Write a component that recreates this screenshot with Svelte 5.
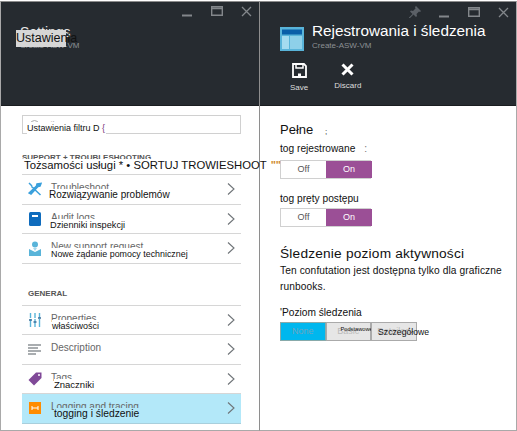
<script>
	const supportRows = [
		{ icon: 'wrench', en: 'Troubleshoot', pl: 'Rozwiązywanie problemów', dx: -2, size: 10 },
		{ icon: 'book', en: 'Audit logs', pl: 'Dzienniki inspekcji', dx: -1, size: 9.2 },
		{ icon: 'person', en: 'New support request', pl: 'Nowe żądanie pomocy technicznej', dx: 0, size: 8.9 }
	];
	const generalRows = [
		{ icon: 'sliders', en: 'Properties', pl: 'właściwości', dx: 1, size: 9 },
		{ icon: 'lines', en: 'Description', pl: '', dx: 0, size: 9 },
		{ icon: 'tag', en: 'Tags', pl: 'Znaczniki', dx: 3, size: 9.5 },
		{ icon: 'log', en: 'Logging and tracing', pl: 'togging i śledzenie', dx: 3, size: 10.300, active: true }
	];
</script>

{#snippet winControls(pin)}
	<div class="controls">
		{#if pin}
			<svg width="12" height="12" viewBox="0 0 12 12"><path d="M7 0l5 5-1 1-1-.5-2.500 2.500.5 2-1 1-2.500-2.500L1 12l-1 0 0-.5 3.500-3.500L1 5.500l1-1 2 .5L6.500 2.500 6 1z" fill="#5b6066"/></svg>
		{/if}
		<svg width="11" height="11" viewBox="0 0 11 11"><path d="M0 9.500h10" stroke="#83878b" stroke-width="2"/></svg>
		<svg width="12" height="11" viewBox="0 0 12 11"><path d="M.7.700h10.600v8.600H.7z M.7 2.500h10.600" fill="none" stroke="#83878b" stroke-width="1.400"/></svg>
		<svg width="11" height="11" viewBox="0 0 11 11"><path d="M1 1l9 9M10 1l-9 9" stroke="#83878b" stroke-width="1.300"/></svg>
	</div>
{/snippet}

{#snippet rowIcon(name)}
	{#if name === 'wrench'}
		<svg width="14" height="14" viewBox="0 0 14 14"><path d="M1 1l3 3M3.500 4.500L12.500 13M13 1.500l-1 2.500-2 .5-7 7.500-2-1 7.500-7 .5-2z" fill="#3aa0dc" stroke="#3aa0dc" stroke-width="1.500"/></svg>
	{:else if name === 'book'}
		<svg width="12" height="14" viewBox="0 0 12 14"><rect width="12" height="14" rx="1.500" fill="#0f6cbd"/><rect x="3" y="3" width="6" height="2" fill="#fff"/></svg>
	{:else if name === 'person'}
		<svg width="12" height="15" viewBox="0 0 12 15"><circle cx="6" cy="3.500" r="3" fill="#59b4d9"/><path d="M0 15V8l6 3 6-3v7z" fill="#59b4d9"/><path d="M4 7h4L6 10z" fill="#a8d8ec"/></svg>
	{:else if name === 'sliders'}
		<svg width="12" height="14" viewBox="0 0 12 14"><path d="M1.500 0v14M6 0v14M10.500 0v14" stroke="#59b4d9" stroke-width="1.400" stroke-dasharray="5 1 8"/><path d="M0 7h3M4.500 9h3M9 5h3" stroke="#3a6f9c" stroke-width="1.500"/></svg>
	{:else if name === 'lines'}
		<svg width="14" height="11" viewBox="0 0 14 11"><path d="M0 1h13M0 4h10M0 7h13M0 10h8" stroke="#8d9296" stroke-width="1.500"/></svg>
	{:else if name === 'tag'}
		<svg width="14" height="14" viewBox="0 0 14 14"><path d="M8 .500h5.500V6L6 13.500.5 8z" fill="#804998"/><circle cx="11" cy="3" r="1" fill="#fff"/></svg>
	{:else}
		<svg width="12" height="12" viewBox="0 0 12 12"><rect width="12" height="12" fill="#ff8c00"/><path d="M3 4v4M9 4v4M3 6h6" stroke="#fff" stroke-width="1"/></svg>
	{/if}
{/snippet}

{#snippet navRow(row)}
	<div class="row" class:active={row.active}>
		<span class="row-icon">{@render rowIcon(row.icon)}</span>
		<span class="row-label">{row.en}</span>
		{#if row.pl}<span class="row-over" style="margin-left: {row.dx}px; font-size: {row.size}px">{row.pl}</span>{/if}
		<svg class="chev" width="8" height="12" viewBox="0 0 8 12"><path d="M1 .500L7 6 1 11.500" fill="none" stroke="#6f7478" stroke-width="1.100"/></svg>
	</div>
{/snippet}

<div class="page">
	<section class="blade">
		<header class="head">
			{@render winControls(false)}
			<div class="left-title">
				<div class="t-en">Settings</div>
				<div class="t-sub">Create-ASW-VM</div>
				<div class="t-over">Ustawienia</div>
			</div>
		</header>
		<div class="body left-body">
			<div class="filter">
				<span class="lens"></span>
				<span class="filter-en">Filter settings</span>
				<span class="filter-over">Ustawienia filtru D <i>{'{'}</i></span>
			</div>
			<div class="label support">
				<span class="support-en">SUPPORT + TROUBLESHOOTING</span>
				<span class="label-over">Tożsamości usługi * • SORTUJ TROWIESHOOT <b>""</b></span>
			</div>
			<div class="list">
				{#each supportRows as row}
					{@render navRow(row)}
				{/each}
			</div>
			<div class="label general">GENERAL</div>
			<div class="list">
				{#each generalRows as row}
					{@render navRow(row)}
				{/each}
			</div>
		</div>
	</section>

	<section class="blade">
		<header class="head">
			{@render winControls(true)}
			<div class="title-row">
				<svg width="24" height="24" viewBox="0 0 24 24"><rect width="24" height="24" fill="#59b4d9"/><rect x="2" y="2.500" width="20" height="5" fill="#0a5fa8"/><rect x="2" y="9" width="7" height="13" fill="#a5dcf0"/><rect x="10" y="9" width="12" height="13" fill="#a5dcf0" opacity=".7"/></svg>
				<div>
					<div class="r-title">Rejestrowania i śledzenia</div>
					<div class="r-sub">Create-ASW-VM</div>
				</div>
			</div>
			<div class="cmds">
				<div class="cmd save">
					<svg width="15" height="15" viewBox="0 0 15 15"><path d="M1 1h11l2 2v11H1z" fill="none" stroke="#fff" stroke-width="1.800"/><path d="M4 1v4h7V1" fill="none" stroke="#fff" stroke-width="1.500"/><rect x="6" y="10.500" width="3" height="3" fill="#fff"/></svg>
					<span>Save</span>
				</div>
				<div class="cmd">
					<svg width="13" height="13" viewBox="0 0 13 13"><path d="M1.500 1.500l10 10M11.500 1.500l-10 10" stroke="#fff" stroke-width="3"/></svg>
					<span>Discard</span>
				</div>
			</div>
		</header>
		<div class="body right-body">
			<h2 class="h-full">Pełne <span class="tick">;</span></h2>
			<div class="field-label">tog rejestrowane <span class="dots">:</span></div>
			<div class="toggle"><span class="off">Off</span><span class="on">On</span></div>
			<div class="field-label second">tog pręty postępu</div>
			<div class="toggle"><span class="off">Off</span><span class="on">On</span></div>
			<h2 class="h-trace">Śledzenie poziom aktywności</h2>
			<p class="note">Ten confutation jest dostępna tylko dla graficzne runbooks.</p>
			<div class="field-label level">'Poziom śledzenia</div>
			<div class="segments">
				<span class="seg none">None</span>
				<span class="seg">Basic<em class="seg-small">Podstawowe</em></span>
				<span class="seg">Detailed<em class="seg-big">Szczegółowe</em></span>
			</div>
		</div>
	</section>
</div>

<style>
	:global(body) {
		margin: 0;
		background: #fff;
	}

	.page {
		display: grid;
		grid-template-columns: 259px 258px;
		width: 517px;
		height: 431px;
		overflow: hidden;
		font-family: "Liberation Sans", sans-serif;
	}

	.blade {
		display: flex;
		flex-direction: column;
		box-sizing: border-box;
		height: 430px;
		border: 1px solid #a9a9a9;
		border-top-color: #8c8c8c;
		border-right-width: 0;
		margin-top: 1px;
		position: relative;
	}

	.blade:last-child {
		border-right-width: 1px;
		border-left-color: #8e8e8e;
	}

	.head {
		height: 104px;
		flex: none;
		background: #262b30;
		border-bottom: 1px solid #1a1d20;
		box-sizing: border-box;
		position: relative;
		color: #fff;
	}

	.controls {
		position: absolute;
		top: 4px;
		right: 7px;
		display: flex;
		align-items: center;
		gap: 18px;
	}

	.left-title {
		position: relative;
		padding: 22px 0 0 19px;
	}

	.t-en {
		font-size: 14px;
		color: #e6e6e6;
	}

	.t-sub {
		font-size: 8px;
		color: #8c9094;
		margin-top: 1px;
	}

	.t-over {
		position: absolute;
		left: 15px;
		top: 28px;
		width: 50px;
		height: 17px;
		line-height: 17px;
		background: #d6d6d6;
		color: #111;
		font-size: 12.500px;
		white-space: nowrap;
	}

	.body {
		position: relative;
		flex: 1;
		background: #fff;
	}

	.left-body {
		padding: 9px 18px 0 21px;
	}

	.filter {
		position: relative;
		box-sizing: border-box;
		height: 19px;
		border: 1.500px solid #d0d0d0;
		display: flex;
		align-items: center;
		gap: 6px;
		padding-left: 7px;
		font-size: 9px;
		color: #b0b0b0;
	}

	.lens {
		width: 7px;
		height: 7px;
		border: 1px solid #aaa;
		border-radius: 50%;
	}

	.filter-over {
		position: absolute;
		left: 4px;
		top: 6px;
		font-size: 9px;
		line-height: 12px;
		color: #111;
		background: #fff;
		padding-right: 1px;
	}

	.filter-over i {
		color: #7a3b7a;
		font-style: normal;
	}

	.label {
		font-size: 8px;
		font-weight: bold;
		color: #555;
		position: relative;
	}

	.support {
		margin-top: 19px;
		height: 21px;
		line-height: 10px;
	}

	.support-en {
		display: block;
		height: 6px;
		overflow: hidden;
	}

	.label-over {
		position: absolute;
		left: 2px;
		top: 6px;
		font-weight: normal;
		font-size: 11.300px;
		line-height: 13px;
		color: #111;
		white-space: nowrap;
		z-index: 2;
	}

	.label-over b {
		color: #d08a2c;
		font-size: 11px;
		margin-left: 1px;
	}

	.general {
		margin-top: 27px;
		height: 14px;
		line-height: 5px;
		padding-left: 6px;
	}

	.list {
		border-top: 1px solid #d6d6d6;
	}

	.row {
		position: relative;
		box-sizing: border-box;
		height: 29.500px;
		border-bottom: 1px solid #d6d6d6;
		display: flex;
		align-items: center;
		font-size: 10px;
		color: #666;
	}

	.row.active {
		background: #b3e8f9;
		border-bottom-color: #a9cfdc;
	}

	.row-icon {
		flex: none;
		width: 29px;
		display: flex;
		justify-content: center;
		padding-right: 3px;
		box-sizing: border-box;
	}

	.row-label {
		flex: 1;
		margin-top: -3px;
	}

	.row-over {
		position: absolute;
		left: 29px;
		top: 14px;
		line-height: 12px;
		color: #111;
		background: #fff;
		padding-right: 1px;
		white-space: nowrap;
	}

	.row.active .row-over {
		background: #b3e8f9;
	}

	.chev {
		margin-right: 6px;
		flex: none;
	}

	.title-row {
		display: flex;
		gap: 8px;
		padding: 19px 0 0 20px;
		align-items: flex-start;
	}

	.title-row svg {
		margin-top: 6px;
	}

	.r-title {
		font-size: 15.300px;
		line-height: 20px;
		color: #fff;
		white-space: nowrap;
	}

	.r-sub {
		font-size: 8px;
		color: #8c9094;
	}

	.cmds {
		display: flex;
		padding: 12px 0 0 30px;
		gap: 26px;
	}

	.cmd {
		display: flex;
		flex-direction: column;
		align-items: center;
		gap: 5px;
		font-size: 8px;
		color: #ddd;
	}

	.right-body {
		padding: 16px 0 0 20px;
		color: #111;
	}

	h2 {
		margin: 0;
		font-weight: normal;
	}

	.h-full {
		font-size: 13px;
		line-height: 16px;
	}

	.tick {
		font-size: 8px;
		margin-left: 8px;
	}

	.field-label {
		font-size: 10.200px;
		line-height: 12px;
		margin-top: 3px;
		white-space: nowrap;
	}

	.dots {
		margin-left: 6px;
		color: #777;
	}

	.second {
		margin-top: 14px;
	}

	.toggle {
		display: grid;
		grid-template-columns: 45px 46px;
		width: 91px;
		height: 19px;
		margin-top: 5px;
		box-sizing: border-box;
		border: 1px solid #d0d0d0;
		font-size: 9px;
		line-height: 17px;
		text-align: center;
	}

	.second + .toggle {
		margin-top: 3px;
	}

	.off {
		color: #555;
	}

	.on {
		background: #9b4f96;
		color: #fff;
	}

	.h-trace {
		font-size: 13.700px;
		line-height: 16px;
		margin-top: 19px;
		letter-spacing: .2px;
	}

	.note {
		margin: 1px 0 0;
		font-size: 10.200px;
		line-height: 16px;
		width: 234px;
		letter-spacing: .1px;
	}

	.level {
		margin-top: 12px;
	}

	.segments {
		display: flex;
		margin-top: 3px;
	}

	.seg {
		position: relative;
		box-sizing: border-box;
		width: 45.500px;
		height: 19px;
		line-height: 17px;
		border: 1px solid #aaa;
		background: #e6e6e6;
		color: #bbb;
		font-size: 9px;
		text-align: center;
	}

	.seg.none {
		background: #00b7ee;
		color: #6ea6c0;
		border-color: #8aa;
	}

	.seg em {
		position: absolute;
		font-style: normal;
		color: #111;
		white-space: nowrap;
	}

	.seg-small {
		left: 14px;
		top: 0;
		line-height: 12px;
		font-size: 5.700px;
	}

	.seg-big {
		left: 6px;
		top: 1px;
		font-size: 8.700px;
	}
</style>
